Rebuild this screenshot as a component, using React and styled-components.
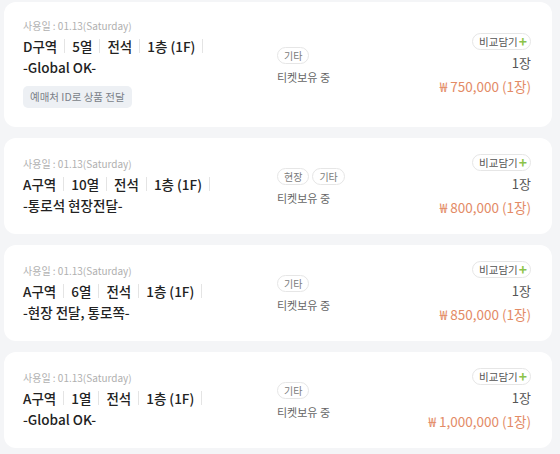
import React from "react";
import styled, { createGlobalStyle } from "styled-components";

const Global = createGlobalStyle`
  html, body { margin: 0; padding: 0; background: #f4f5f7; }
  body { font-family: "Noto Sans CJK KR", "Noto Sans", sans-serif; }
  * { box-sizing: border-box; }
`;

const List = styled.div`
  display: flex;
  flex-direction: column;
  gap: 11px;
  padding: 2px 8px 0 4px;
`;

const Card = styled.div`
  background: #fff;
  border-radius: 12px;
  padding: 16px 21px 16px 19px;
  display: grid;
  grid-template-columns: 1fr 1fr;
  align-items: center;
`;

const Left = styled.div`
  display: flex;
  flex-direction: column;
  align-items: flex-start;
`;

const DateText = styled.div`
  font-size: 10px;
  line-height: 16px;
  color: #b0b0b0;
  margin-bottom: 2px;
`;

const MainLine = styled.div`
  display: flex;
  align-items: center;
  font-size: 13.5px;
  line-height: 20px;
  font-weight: 500;
  color: #222;
`;

const Sep = styled.span`
  display: inline-block;
  width: 1px;
  height: 14px;
  background: #e4e4e4;
  margin: 0 7px;
`;

const SubLine = styled.div`
  font-size: 13.5px;
  line-height: 22px;
  font-weight: 500;
  color: #222;
`;

const DeliverBtn = styled.div`
  margin-top: 8px;
  margin-bottom: 3px;
  background: #edf0f4;
  color: #7a7f88;
  font-size: 10.5px;
  line-height: 22px;
  padding: 0 7px;
  border-radius: 5px;
`;

const Right = styled.div`
  display: flex;
  justify-content: space-between;
  align-items: center;
`;

const Middle = styled.div`
  display: flex;
  flex-direction: column;
  align-items: flex-start;
  gap: 5px;
  margin-top: 2px;
`;

const Tags = styled.div`
  display: flex;
  gap: 3px;
`;

const Tag = styled.span`
  border: 1px solid #e6e6e6;
  border-radius: 9px;
  font-size: 10px;
  line-height: 15px;
  padding: 0 6px;
  color: #7b7b7b;
`;

const Status = styled.div`
  font-size: 11px;
  line-height: 16px;
  color: #666;
`;

const PriceCol = styled.div`
  display: flex;
  flex-direction: column;
  align-items: flex-end;
`;

const CompareBtn = styled.span`
  display: inline-flex;
  align-items: center;
  border: 1px solid #e6e6e6;
  border-radius: 9px;
  font-size: 10.5px;
  line-height: 15px;
  padding: 0 3px 0 6px;
  color: #555;
`;

const Plus = styled.span`
  color: #8bc34a;
  font-weight: 700;
  font-size: 14px;
  line-height: 15px;
  margin-left: 1px;
`;

const Qty = styled.div`
  margin-top: 3px;
  font-size: 13px;
  line-height: 19px;
  color: #555;
`;

const Price = styled.div`
  margin-top: 4px;
  font-size: 13.5px;
  line-height: 21px;
  color: #e38b66;
`;

const items = [
  { zone: "D구역", row: "5열", sub: "-Global OK-", tags: ["기타"], price: "750,000", btn: true },
  { zone: "A구역", row: "10열", sub: "-통로석 현장전달-", tags: ["현장", "기타"], price: "800,000" },
  { zone: "A구역", row: "6열", sub: "-현장 전달, 통로쪽-", tags: ["기타"], price: "850,000" },
  { zone: "A구역", row: "1열", sub: "-Global OK-", tags: ["기타"], price: "1,000,000" },
];

export default function App() {
  return (
    <>
      <Global />
      <List>
        {items.map((it, i) => (
          <Card key={i}>
            <Left>
              <DateText>사용일 : 01.13(Saturday)</DateText>
              <MainLine>
                {it.zone}
                <Sep />
                {it.row}
                <Sep />
                전석
                <Sep />
                1층 (1F)
                <Sep />
              </MainLine>
              <SubLine>{it.sub}</SubLine>
              {it.btn && <DeliverBtn>예매처 ID로 상품 전달</DeliverBtn>}
            </Left>
            <Right>
              <Middle>
                <Tags>
                  {it.tags.map((t) => (
                    <Tag key={t}>{t}</Tag>
                  ))}
                </Tags>
                <Status>티켓보유 중</Status>
              </Middle>
              <PriceCol>
                <CompareBtn>
                  비교담기<Plus>+</Plus>
                </CompareBtn>
                <Qty>1장</Qty>
                <Price>₩ {it.price} (1장)</Price>
              </PriceCol>
            </Right>
          </Card>
        ))}
      </List>
    </>
  );
}
